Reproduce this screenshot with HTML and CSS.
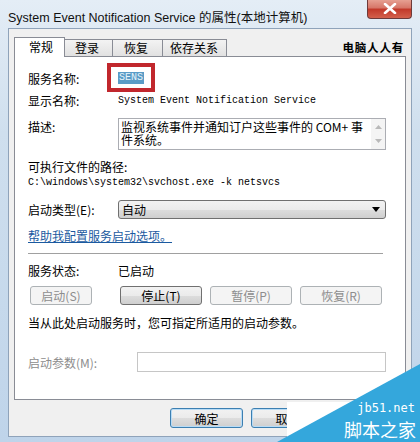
FILE: index.html
```html
<!DOCTYPE html>
<html lang="zh-CN">
<head>
  <meta charset="UTF-8" />
  <title>System Event Notification Service 的属性(本地计算机)</title>
  <link rel="stylesheet" href="styles.css">
</head>
<body>

  <div class="window">
    <!-- Title bar -->
    <div class="titlebar">
      <span class="title">System Event Notification Service 的属性(本地计算机)</span>
      <button class="close-btn">
        <svg width="14" height="11" viewBox="0 0 14 11"><path d="M2 1 L12 10 M12 1 L2 10" stroke="#fff" stroke-width="2.6" stroke-linecap="round"/></svg>
      </button>
    </div>

    <div class="client">
      <!-- Tabs -->
      <div class="tabs">
        <div class="tab active">常规</div>
        <div class="tab">登录</div>
        <div class="tab">恢复</div>
        <div class="tab">依存关系</div>
        <div class="brand">电脑人人有</div>
      </div>

      <div class="panel">
        <div class="row r-name">
          <span class="label">服务名称:</span>
          <span class="mono selected">SENS</span>
          <div class="mark"></div>
        </div>
        <div class="row">
          <span class="label">显示名称:</span>
          <span class="mono">System Event Notification Service</span>
        </div>
        <div class="row r-desc">
          <span class="label">描述:</span>
          <div class="memo">
            <div class="memo-text">监视系统事件并通知订户这些事件的 COM+ 事件系统。</div>
            <div class="memo-scroll">
              <svg width="7" height="4" viewBox="0 0 7 4"><path d="M0 4 L3.5 0 L7 4 Z" fill="#b9b9b9"/></svg>
              <svg width="7" height="4" viewBox="0 0 7 4"><path d="M0 0 L3.5 4 L7 0 Z" fill="#b9b9b9"/></svg>
            </div>
          </div>
        </div>
        <div class="path-label">可执行文件的路径:</div>
        <div class="mono path">C:\windows\system32\svchost.exe -k netsvcs</div>
        <div class="row r-type">
          <span class="label">启动类型(<u>E</u>):</span>
          <div class="select">
            <span>自动</span>
            <svg width="8" height="5" viewBox="0 0 8 5"><path d="M0 0 L8 0 L4 5 Z" fill="#000"/></svg>
          </div>
        </div>
        <a class="help" href="#">帮助我配置服务启动选项。</a>
        <div class="divider"></div>
        <div class="row r-status">
          <span class="label">服务状态:</span>
          <span>已启动</span>
        </div>
        <div class="svc-buttons">
          <button class="btn small" disabled>启动(<u>S</u>)</button>
          <button class="btn">停止(<u>T</u>)</button>
          <button class="btn" disabled>暂停(<u>P</u>)</button>
          <button class="btn" disabled>恢复(<u>R</u>)</button>
        </div>
        <p class="hint">当从此处启动服务时，您可指定所适用的启动参数。</p>
        <div class="row r-param">
          <span class="label dim">启动参数(<u>M</u>):</span>
          <div class="param-input"></div>
        </div>
      </div>

      <div class="dialog-buttons">
        <button class="btn dlg">确定</button>
        <button class="btn dlg">取消</button>
      </div>
    </div>

    <!-- watermark -->
    <div class="watermark">
      <div class="wm-bg"></div>
      <svg class="wm-shape" width="143" height="78" viewBox="0 0 143 78"><path d="M143 0 L143 78 L0 78 Z" fill="#34a7dc"/></svg>
      <span class="wm-site">jb51.net</span>
      <span class="wm-name">脚本之家</span>
    </div>
  </div>

</body>
</html>
```

FILE: styles.css
```css
* {
  margin: 0;
  padding: 0;
  box-sizing: border-box;
}

body {
  width: 420px;
  height: 442px;
  overflow: hidden;
  font-family: "Noto Sans CJK SC", sans-serif;
  font-size: 12px;
  color: #000;
}

.window {
  position: relative;
  width: 420px;
  height: 442px;
  background: linear-gradient(180deg, #e4edf6 0%, #cfdfee 30%, #bfd4ea 100%);
  padding: 0 8px 5px;
  display: flex;
  flex-direction: column;
}

.titlebar {
  height: 28px;
  display: flex;
  align-items: flex-start;
  justify-content: space-between;
}

.title {
  font-family: "Liberation Sans", "Noto Sans CJK SC", sans-serif;
  font-size: 12.5px;
  margin-top: 7px;
  color: #111;
}

.close-btn {
  width: 45px;
  height: 20px;
  margin-top: -1px;
  border: 1px solid #6d3a3a;
  border-top: none;
  border-radius: 0 0 4px 4px;
  background: linear-gradient(180deg, #e8a597 0%, #d7786a 45%, #c23a2b 55%, #d3604c 100%);
  display: flex;
  align-items: center;
  justify-content: center;
}

.client {
  flex: 1;
  background: #f0f0f0;
  border: 1px solid #8fa3ba;
  padding: 8px 5px 0;
  display: flex;
  flex-direction: column;
}

.tabs {
  display: flex;
  align-items: flex-end;
  height: 19px;
  position: relative;
  z-index: 1;
}

.tab {
  height: 17px;
  padding: 0 8px;
  border: 1px solid #898c95;
  border-bottom: none;
  border-left: none;
  background: linear-gradient(180deg, #f3f3f3, #e1e1e1);
  line-height: 16px;
  font-size: 12px;
}

.tab.active {
  height: 20px;
  margin-bottom: -1px;
  width: 51px;
  padding-left: 14px;
  border-left: 1px solid #898c95;
  background: #fff;
  line-height: 18px;
}

.tab:nth-child(2) { width: 48px; padding-left: 10px; }
.tab:nth-child(3) { width: 50px; padding-left: 11px; }
.tab:nth-child(4) { width: 64px; padding-left: 7px; }

.brand {
  margin-left: auto;
  margin-right: 2px;
  font-weight: 700;
  font-size: 11.5px;
  letter-spacing: 0.8px;
  align-self: center;
  font-family: "Noto Sans CJK SC", serif;
}

.panel {
  height: 344px;
  background: #fff;
  border: 1px solid #898c95;
  padding: 10px 19px 0 13px;
}

.row {
  display: flex;
  align-items: center;
  height: 22px;
}

.label {
  width: 90px;
  flex-shrink: 0;
}

.mono {
  font-family: "Liberation Mono", "DejaVu Sans Mono", monospace;
  font-size: 10px;
}

.r-name {
  position: relative;
}

.selected {
  background: #5a9cc7;
  color: #e8f4fb;
  padding: 0 1px;
  line-height: 12px;
}

.mark {
  position: absolute;
  left: 79px;
  top: -4px;
  width: 48px;
  height: 29px;
  border: 4px solid #c1272d;
}

.r-desc {
  height: 36px;
  margin-top: 5px;
  align-items: flex-start;
}

.r-desc .label {
  line-height: 22px;
}

.memo {
  flex: 1;
  height: 32px;
  margin-top: 2px;
  border: 1px solid #abadb3;
  display: flex;
}

.memo-text {
  flex: 1;
  line-height: 13px;
  padding: 1px 2px;
  font-size: 12px;
}

.memo-scroll {
  width: 14px;
  display: flex;
  flex-direction: column;
  justify-content: space-between;
  align-items: center;
  padding: 6px 0 6px;
  background: #f4f4f4;
}

.path-label {
  margin-top: 7px;
  line-height: 16px;
}

.path {
  line-height: 14px;
  margin-top: 1px;
}

.r-type {
  margin-top: 9px;
  height: 20px;
}

.select {
  flex: 1;
  height: 19px;
  border: 1px solid #707070;
  border-radius: 3px;
  background: linear-gradient(180deg, #f2f2f2 0%, #ebebeb 50%, #dddddd 51%, #cfcfcf 100%);
  display: flex;
  align-items: center;
  justify-content: space-between;
  padding: 0 5px 0 3px;
}

.help {
  display: inline-block;
  margin-top: 9px;
  line-height: 16px;
  color: #1b5aa0;
  text-decoration: underline;
}

.divider {
  margin-top: 9px;
  height: 1px;
  background: #a0a0a0;
  width: 355px;
}

.r-status {
  margin-top: 8px;
  height: 16px;
}

.svc-buttons {
  display: flex;
  gap: 8px;
  margin-top: 8px;
  padding-left: 2px;
}

.btn {
  width: 82px;
  height: 19px;
  border: 1px solid #707070;
  border-radius: 3px;
  background: linear-gradient(180deg, #f2f2f2 0%, #ebebeb 50%, #dddddd 51%, #cfcfcf 100%);
  font-family: "Noto Sans CJK SC", sans-serif;
  font-size: 12px;
  color: #000;
  line-height: 17px;
}

.btn u {
  text-decoration: none;
}

.btn.small {
  width: 62px;
  margin-right: 20px;
}

.btn:disabled {
  border-color: #adb2b5;
  background: #f4f4f4;
  color: #8d8d8d;
}

.hint {
  margin-top: 10px;
  line-height: 16px;
}

.r-param {
  margin-top: 20px;
}

.dim {
  color: #8d8d8d;
  width: 109px;
}

.label u,
.dim u {
  text-decoration: none;
}

.param-input {
  flex: 1;
  height: 20px;
  border: 1px solid #c6c6c6;
}

.dialog-buttons {
  display: flex;
  gap: 8px;
  padding: 8px 0 0 156px;
}

.btn.dlg {
  width: 73px;
  height: 20px;
  border-color: #3c7fb1;
  box-shadow: inset 0 0 0 1px #b8dcf6;
}

.watermark {
  position: absolute;
  right: 0;
  bottom: 0;
  width: 143px;
  height: 78px;
}

.wm-bg {
  position: absolute;
  right: 0;
  bottom: 0;
  width: 133px;
  height: 40px;
  background: #fff;
}

.wm-shape {
  position: absolute;
  right: 0;
  bottom: 0;
}

.wm-site {
  position: absolute;
  right: 5px;
  bottom: 27px;
  color: #fff;
  font-family: "DejaVu Sans Mono", monospace;
  font-size: 12px;
  line-height: 13px;
}

.wm-name {
  position: absolute;
  right: 4px;
  bottom: 0;
  color: #fff;
  font-size: 18px;
  line-height: 26px;
}
```
